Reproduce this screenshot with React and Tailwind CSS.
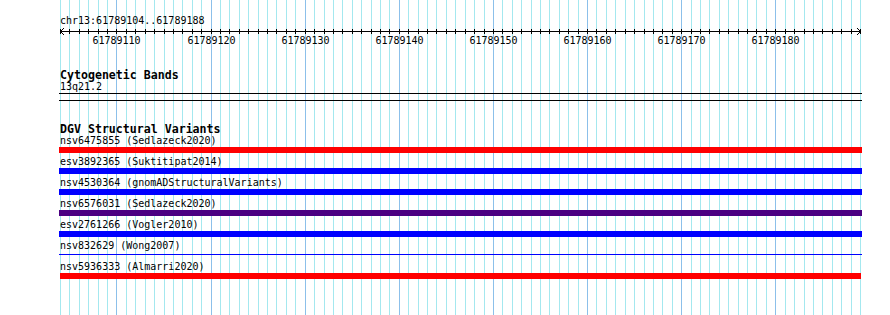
import React from "react";

const START = 61789104;
const NBASES = 85;
const X0 = 60;
const W = 800;
const px = (i) => X0 + Math.round((i * W) / NBASES);

const rows = [
  { label: "nsv6475855 (Sedlazeck2020)", color: "bg-[#ff0000]" },
  { label: "esv3892365 (Suktitipat2014)", color: "bg-[#0000ff]" },
  { label: "nsv4530364 (gnomADStructuralVariants)", color: "bg-[#0000ff]" },
  { label: "nsv6576031 (Sedlazeck2020)", color: "bg-[#4b0082]" },
  { label: "esv2761266 (Vogler2010)", color: "bg-[#0000ff]" },
  { label: "nsv832629 (Wong2007)", color: "thin" },
  { label: "nsv5936333 (Almarri2020)", color: "bg-[#ff0000]", last: true },
];

function GridLines() {
  const lines = [];
  for (let i = 0; i <= NBASES; i++) {
    const major = i % 10 === 6;
    lines.push(
      <div
        key={i}
        className={`absolute top-0 bottom-0 w-px ${major ? "bg-[#8cc0ea]" : "bg-[#a4e8ef]"}`}
        style={{ left: px(i) }}
      />
    );
  }
  return <div className="absolute inset-0">{lines}</div>;
}

function Ruler() {
  const ticks = [];
  for (let i = 0; i <= NBASES; i++) {
    const x = px(i) - 59 + 0.5;
    ticks.push(<line key={i} x1={x} y1={2} x2={x} y2={7} stroke="#000" strokeWidth="1" />);
  }
  return (
    <svg width="805" height="8" className="block">
      <line x1={1} y1={4.5} x2={802} y2={4.5} stroke="#000" strokeWidth="1" />
      {ticks}
      <polyline points="5,1 1.5,4.5 5,8" fill="none" stroke="#000" strokeWidth="1" />
      <polyline points="798,1 801.5,4.5 798,8" fill="none" stroke="#000" strokeWidth="1" />
    </svg>
  );
}

function RulerLabels() {
  const labels = [];
  for (let i = 6; i < NBASES; i += 10) {
    labels.push(
      <div
        key={i}
        className="absolute top-0 -translate-x-1/2 whitespace-nowrap"
        style={{ left: px(i) - 59 + 0.5 }}
      >
        {START + i}
      </div>
    );
  }
  return <div className="relative h-[12px] leading-[12px]">{labels}</div>;
}

export default function App() {
  return (
    <div
      className="relative w-[890px] h-[315px] overflow-hidden bg-white text-black text-[10px] leading-[12px]"
      style={{ fontFamily: '"DejaVu Sans Mono", "Liberation Mono", monospace' }}
    >
      <GridLines />
      <div className="relative ml-[59px] w-[803px] pt-[15px] flex flex-col">
        <div className="h-[12px] pl-px">chr13:61789104..61789188</div>
        <Ruler />
        <RulerLabels />
        <div className="mt-[22px] pl-px font-bold text-[11.6px] leading-[12px]">Cytogenetic Bands</div>
        <div className="pl-px h-[12px]">13q21.2</div>
        <div className="h-px bg-black" />
        <div className="h-[6px]" />
        <div className="h-px bg-black" />
        <div className="mt-[22px] pl-px font-bold text-[11.6px] leading-[12px]">DGV Structural Variants</div>
        {rows.map((r, idx) => (
          <div key={idx} className="flex flex-col pb-[3px]">
            <div className="pl-px h-[12px] whitespace-nowrap">{r.label}</div>
            {r.color === "thin" ? (
              <div className="h-[6px] flex flex-col pt-[2px]">
                <div className="h-px bg-[#0000ff]" />
              </div>
            ) : (
              <div className={`h-[6px] ${r.color} ${r.last ? "ml-px mr-px" : ""}`} />
            )}
          </div>
        ))}
      </div>
    </div>
  );
}
